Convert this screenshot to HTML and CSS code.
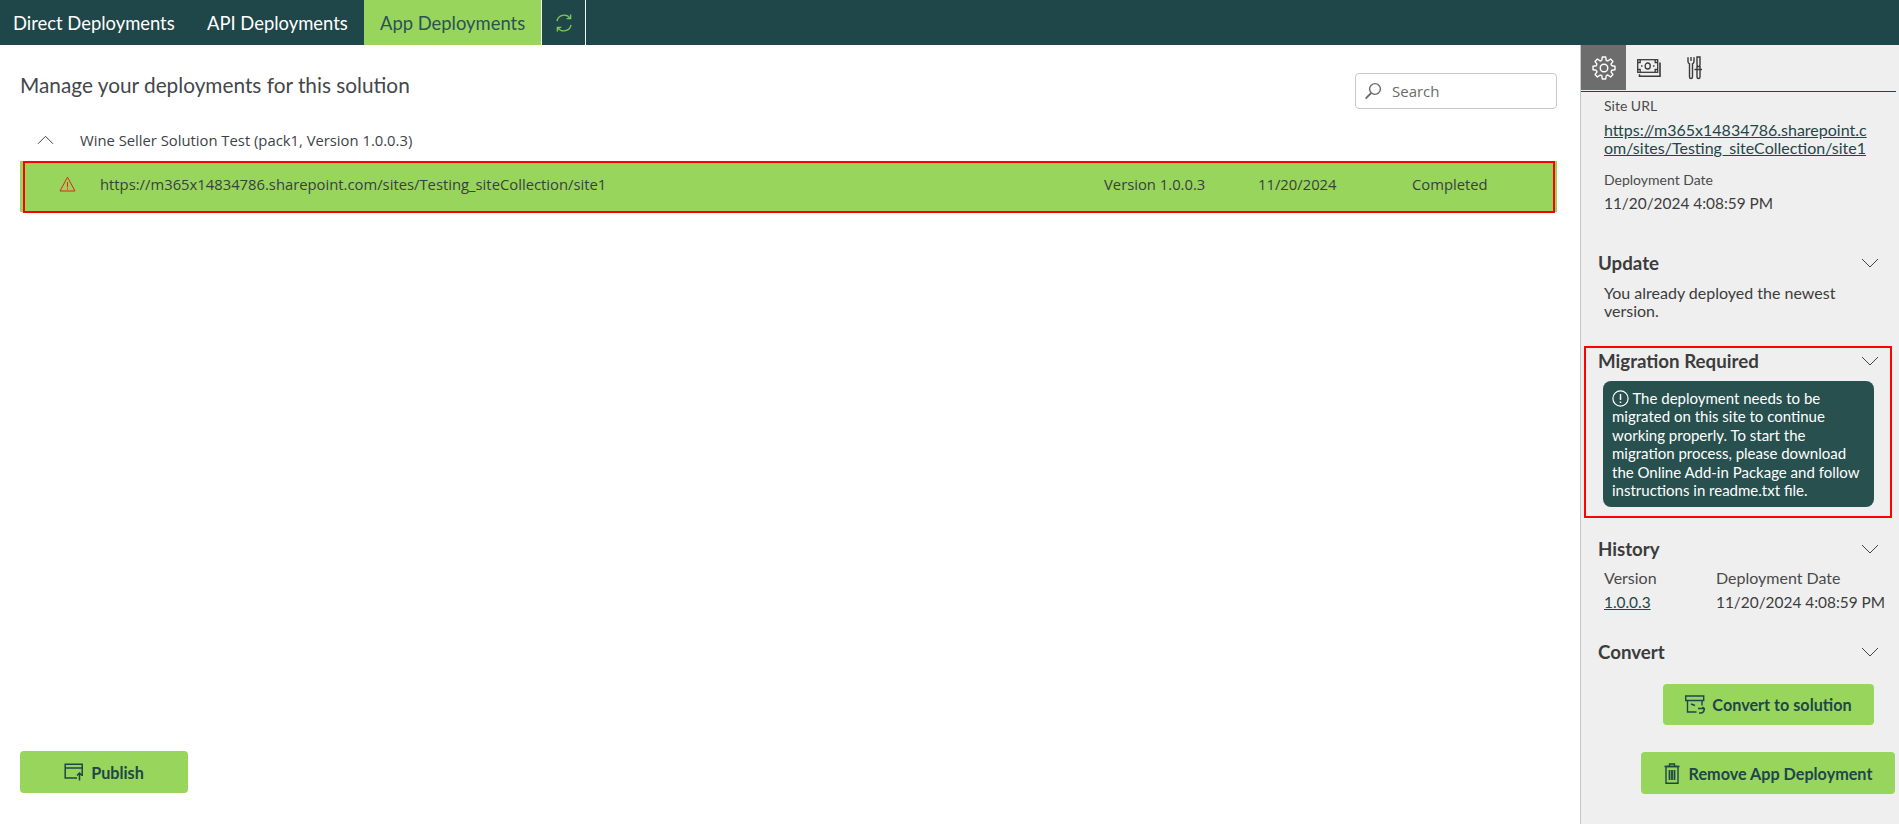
FILE: index.html
```html
<!DOCTYPE html>
<html lang="en">
<head>
<meta charset="utf-8" />
<title>App Deployments</title>
<link rel="stylesheet" href="styles.css">
</head>
<body>
	<nav class="topBar">
		<a class="navTab">Direct Deployments</a>
		<a class="navTab">API Deployments</a>
		<a class="navTab navTabActive">App Deployments</a>
		<a class="navRefresh">
			<svg width="20" height="20" viewBox="0 0 20 20" fill="none" stroke="#7cc65a" stroke-width="1.4">
				<path d="M3 8.200A7.200 7.200 0 0 1 16 5.200"/>
				<path d="M16.600 1.600v4h-4"/>
				<path d="M17 11.800A7.200 7.200 0 0 1 4 14.800"/>
				<path d="M3.400 18.400v-4h4"/>
			</svg>
		</a>
	</nav>

	<div class="content">
		<main class="main">
			<div class="mainHeader">
				<h1 class="pageTitle">Manage your deployments for this solution</h1>
				<div class="searchBox">
					<svg width="20" height="20" viewBox="0 0 20 20" fill="none" stroke="#6b6b6b" stroke-width="1.4">
						<circle cx="12" cy="8" r="5.400"/>
						<path d="M8.200 12 2.600 17.600" stroke-width="1.800"/>
					</svg>
					<span>Search</span>
				</div>
			</div>

			<div class="groupTitle">
				<svg width="17" height="10" viewBox="0 0 17 10" fill="none" stroke="#444" stroke-width="1">
					<path d="M1 8.800 8.500 1.300l7.500 7.500"/>
				</svg>
				<span>Wine Seller Solution Test (pack1, Version 1.0.0.3)</span>
			</div>

			<div class="deployRow">
				<div class="deployRowInner">
					<svg width="17" height="16" viewBox="0 0 17 16" fill="none" stroke="#e8211d" stroke-width="1">
						<path d="M8.500 1.200 1 15h15z"/>
						<path d="M8.500 6v5.200M8.500 12.200v1.300"/>
					</svg>
					<span class="deployUrl">https://m365x14834786.sharepoint.com/sites/Testing_siteCollection/site1</span>
					<span>Version 1.0.0.3</span>
					<span>11/20/2024</span>
					<span>Completed</span>
				</div>
			</div>

			<div class="mainFooter">
				<button class="greenButton publishButton">
					<svg width="20" height="18" viewBox="0 0 20 18" fill="none" stroke="#1f4648" stroke-width="1.500">
						<path d="M13 15H1.200V1.200h17V13"/>
						<path d="M1.200 5h17"/>
						<path d="M15.500 17.500v-7M13 12.600l2.500-2.600 2.500 2.600"/>
					</svg>
					Publish
				</button>
			</div>
		</main>

		<aside class="sidePanel">
			<div class="sideTabs">
				<div class="sideTab sideTabActive">
					<svg width="24" height="24" viewBox="0 0 24 24" fill="none" stroke="#fff" stroke-width="1.400" stroke-linejoin="round">
						<circle cx="12" cy="12" r="3.800"/>
						<path id="gearTooth" d="M9.800 4.300 10.300 1h3.400l.5 3.300L15.890 5"/>
						<use href="#gearTooth" transform="rotate(45 12 12)"/>
						<use href="#gearTooth" transform="rotate(90 12 12)"/>
						<use href="#gearTooth" transform="rotate(135 12 12)"/>
						<use href="#gearTooth" transform="rotate(180 12 12)"/>
						<use href="#gearTooth" transform="rotate(225 12 12)"/>
						<use href="#gearTooth" transform="rotate(270 12 12)"/>
						<use href="#gearTooth" transform="rotate(315 12 12)"/>
					</svg>
				</div>
				<div class="sideTab">
					<svg width="24" height="18" viewBox="0 0 24 18" fill="none" stroke="#3a3a3a" stroke-width="1.300">
						<rect x=".7" y=".7" width="20" height="12.600"/>
						<path d="M23 3.500v13.800H2.500v-2" stroke-width="1.600"/>
						<ellipse cx="10.700" cy="7" rx="2.600" ry="3"/>
						<path d="M4 7h1.500M16 7h1.500M.7 3.500h2.500V.7M20.700 3.500h-2.500V.7M.7 10.500h2.500v2.800M20.700 10.500h-2.500v2.800"/>
					</svg>
				</div>
				<div class="sideTab">
					<svg width="15" height="24" viewBox="0 0 15 24" fill="none" stroke="#3a3a3a" stroke-width="1.400">
						<path d="M1 1.200v4.300a2.600 2.600 0 0 0 1.500 2.300V21a1.500 1.500 0 0 0 3 0V7.800A2.600 2.600 0 0 0 7 5.500V1.200"/>
						<path d="M4 1v4"/>
						<path d="M10 1h3v7.500l-.5 2h-2l-.5-2zM10 10.500h3V21a1.500 1.500 0 0 1-3 0zM7.500 13.500h7.500"/>
					</svg>
				</div>
			</div>

			<div class="siteInfo">
				<div class="fieldLabel">Site URL</div>
				<a class="fieldLink">https://m365x14834786.sharepoint.com/sites/Testing_siteCollection/site1</a>
				<div class="fieldLabel dateLabel">Deployment Date</div>
				<div class="fieldValue">11/20/2024 4:08:59 PM</div>
			</div>

			<section class="sideSection updateSection">
				<div class="sectionHead">
					<h2>Update</h2>
					<svg class="chevron" width="18" height="10" viewBox="0 0 18 10" fill="none" stroke="#444" stroke-width="1"><path d="M1 1l8 8 8-8"/></svg>
				</div>
				<p class="sectionText">You already deployed the newest version.</p>
			</section>

			<section class="sideSection migrationSection">
				<div class="sectionHead">
					<h2>Migration Required</h2>
					<svg class="chevron" width="18" height="10" viewBox="0 0 18 10" fill="none" stroke="#444" stroke-width="1"><path d="M1 1l8 8 8-8"/></svg>
				</div>
				<div class="noticeBox">
					<svg class="noticeIcon" width="17" height="17" viewBox="0 0 17 17" fill="none" stroke="#fff" stroke-width="1.200">
						<circle cx="8.500" cy="8.500" r="7.600"/>
						<path d="M8.500 4v6M8.500 11.500v1.500" stroke-width="1.500"/>
					</svg>
					The deployment needs to be migrated on this site to continue working properly. To start the migration process, please download the Online Add-in Package and follow instructions in readme.txt file.
				</div>
			</section>

			<section class="sideSection historySection">
				<div class="sectionHead">
					<h2>History</h2>
					<svg class="chevron" width="18" height="10" viewBox="0 0 18 10" fill="none" stroke="#444" stroke-width="1"><path d="M1 1l8 8 8-8"/></svg>
				</div>
				<div class="historyGrid">
					<div class="fieldLabel">Version</div>
					<div class="fieldLabel">Deployment Date</div>
					<a class="fieldLink">1.0.0.3</a>
					<div class="fieldValue">11/20/2024 4:08:59 PM</div>
				</div>
			</section>

			<section class="sideSection convertSection">
				<div class="sectionHead">
					<h2>Convert</h2>
					<svg class="chevron" width="18" height="10" viewBox="0 0 18 10" fill="none" stroke="#444" stroke-width="1"><path d="M1 1l8 8 8-8"/></svg>
				</div>
				<button class="greenButton convertButton">
					<svg width="20" height="19" viewBox="0 0 20 19" fill="none" stroke="#1f4648" stroke-width="1.400">
						<path d="M.700 1h18v4.500H.700zM2.500 5.500v11.500h9M17 5.500v5"/>
						<path d="M6 9l4 1.500"/>
						<path d="M13 13.500h6l-1.500-1.500M19 13.500a3.500 3.500 0 0 1-3.500 4.500h-1.500" stroke-width="1.600"/>
					</svg>
					Convert to solution
				</button>
			</section>

			<div class="removeWrap">
				<button class="greenButton removeButton">
					<svg width="16" height="21" viewBox="0 0 16 21" fill="none" stroke="#1f4648" stroke-width="1.400">
						<path d="M.500 3.500h15M5.500 3.500V1h5v2.500"/>
						<path d="M2 3.500h12v16.800H2z"/>
						<path d="M5.500 7v10M8 7v10M10.500 7v10" stroke-width="1.800"/>
					</svg>
					Remove App Deployment
				</button>
			</div>
		</aside>
	</div>
</body>
</html>
```
FILE: styles.css
```css
html, body {
	margin: 0;
	height: 100%;
	overflow: hidden;
}

body {
	font-family: Lato, sans-serif;
	color: #3c3c3c;
	background-color: #fff;
	display: flex;
	flex-direction: column;
}

h1, h2, p {
	margin: 0;
	font-weight: normal;
}

svg {
	display: block;
	flex: none;
}

/* top navigation */
.topBar {
	height: 45px;
	flex: none;
	display: flex;
	background-color: #1f4648;
}

.navTab {
	display: flex;
	align-items: center;
	box-sizing: border-box;
	width: 191px;
	padding-left: 13px;
	font-size: 18.4px;
	white-space: nowrap;
	color: #fff;
}

.navTab:nth-child(2) {
	width: 173px;
	padding-left: 16px;
}

.navTab.navTabActive {
	width: 177px;
	padding-left: 16px;
	background-color: #97d55d;
	color: #2c5254;
}

.navRefresh {
	width: 45px;
	box-sizing: border-box;
	display: flex;
	align-items: center;
	justify-content: center;
	border-left: 1px solid #fff;
	border-right: 1px solid #fff;
}

.content {
	flex: 1;
	display: flex;
	min-height: 0;
}

/* left side */
.main {
	flex: 1;
	display: flex;
	flex-direction: column;
	padding: 0 23px 31px 20px;
}

.mainHeader {
	display: flex;
	justify-content: space-between;
	align-items: flex-start;
	height: 77px;
	padding-top: 28px;
	box-sizing: border-box;
}

.pageTitle {
	font-size: 20.800px;
	line-height: 30px;
	color: #43474b;
	margin-top: -3px;
}

.searchBox {
	width: 202px;
	height: 36px;
	box-sizing: border-box;
	display: flex;
	align-items: center;
	gap: 9px;
	padding-left: 7px;
	border: 1px solid #c8c8c8;
	border-radius: 4px;
	font-family: "Open Sans", sans-serif;
	font-size: 15px;
	color: #6b6b6b;
}

.groupTitle {
	height: 39px;
	padding-bottom: 4px;
	box-sizing: border-box;
	display: flex;
	align-items: center;
	gap: 26px;
	padding-left: 17px;
	font-family: "Open Sans", sans-serif;
	font-size: 14.800px;
	color: #3d4347;
}

.deployRow {
	height: 51px;
	padding-left: 3px;
	background-color: #97d55d;
}

.deployRowInner {
	height: 52px;
	margin-right: 2px;
	box-sizing: border-box;
	border: 2px solid #f00;
	display: grid;
	grid-template-columns: 17px 1028px 154px 154px 1fr;
	align-items: center;
	padding: 0 0 7px 34px;
	font-family: "Open Sans", sans-serif;
	font-size: 14.800px;
	color: #3a4040;
}

.deployUrl {
	padding-left: 24px;
}

.mainFooter {
	margin-top: auto;
}

/* buttons */
.greenButton {
	display: flex;
	align-items: center;
	justify-content: center;
	gap: 7px;
	height: 42px;
	border: none;
	border-radius: 4px;
	background-color: #97d55d;
	color: #1f4648;
	font-family: Lato, sans-serif;
	font-size: 16.200px;
	font-weight: bold;
}

.publishButton {
	width: 168px;
}

.convertButton {
	width: 211px;
	height: 41px;
	margin: 20px 0 0 65px;
}

.removeButton {
	width: 254px;
	margin-left: 60px;
	gap: 9px;
}

/* right side panel */
.sidePanel {
	width: 319px;
	flex: none;
	box-sizing: border-box;
	border-left: 1px solid #c8c8c8;
	background-color: #efefef;
	font-size: 16px;
}

.sideTabs {
	height: 47px;
	box-sizing: border-box;
	display: flex;
	border-bottom: 1px solid #1f4648;
	margin-right: 3px;
}

.sideTab {
	width: 45px;
	height: 45px;
	display: flex;
	align-items: center;
	justify-content: center;
}

.sideTab:last-child {
	width: 46px;
}

.sideTabActive {
	background-color: #6d6d6d;
}

.siteInfo {
	padding: 5px 0 0 23px;
	height: 159px;
	box-sizing: border-box;
}

.fieldLabel {
	font-size: 14px;
	line-height: 18px;
	color: #4a4a4a;
}

.fieldLink {
	display: block;
	margin-top: 6px;
	line-height: 18px;
	color: #1f4648;
	text-decoration: underline;
	width: 270px;
	word-break: break-all;
}

.dateLabel {
	margin-top: 14px;
}

.fieldValue {
	margin-top: 5px;
	font-size: 15.400px;
	line-height: 18px;
	color: #3c3c3c;
}

.sideSection {
	padding: 0 20px 0 17px;
}

.sectionHead {
	display: flex;
	justify-content: space-between;
	align-items: center;
	height: 24px;
}

.sectionHead h2 {
	font-size: 18.700px;
	font-weight: bold;
	color: #3c3c3c;
}

.sectionText {
	padding: 9px 30px 0 6px;
	line-height: 18px;
}

.updateSection {
	height: 95px;
}

.migrationSection {
	margin: 0 7px 0 3px;
	padding: 1px 11px 0 12px;
	height: 172px;
	box-sizing: border-box;
	border: 2px solid #f00;
}

.noticeBox {
	margin: 8px 5px 0 5px;
	padding: 8px 6px 7px 9px;
	height: 126px;
	box-sizing: border-box;
	border-radius: 8px;
	background-color: #28504f;
	color: #fff;
	font-size: 15px;
	line-height: 18.400px;
}

.noticeIcon {
	display: inline-block;
	vertical-align: -3px;
}

.historySection {
	margin-top: 19px;
	height: 103px;
}

.historyGrid {
	display: grid;
	grid-template-columns: 112px 1fr;
	padding: 8px 0 0 6px;
	margin-right: -18px;
}

.historyGrid .fieldLabel {
	font-size: 16px;
}

.historyGrid .fieldLink {
	width: auto;
	font-size: 15.400px;
}

.historyGrid .fieldValue {
	margin-top: 6px;
}

.convertSection {
	height: 112px;
}
```
